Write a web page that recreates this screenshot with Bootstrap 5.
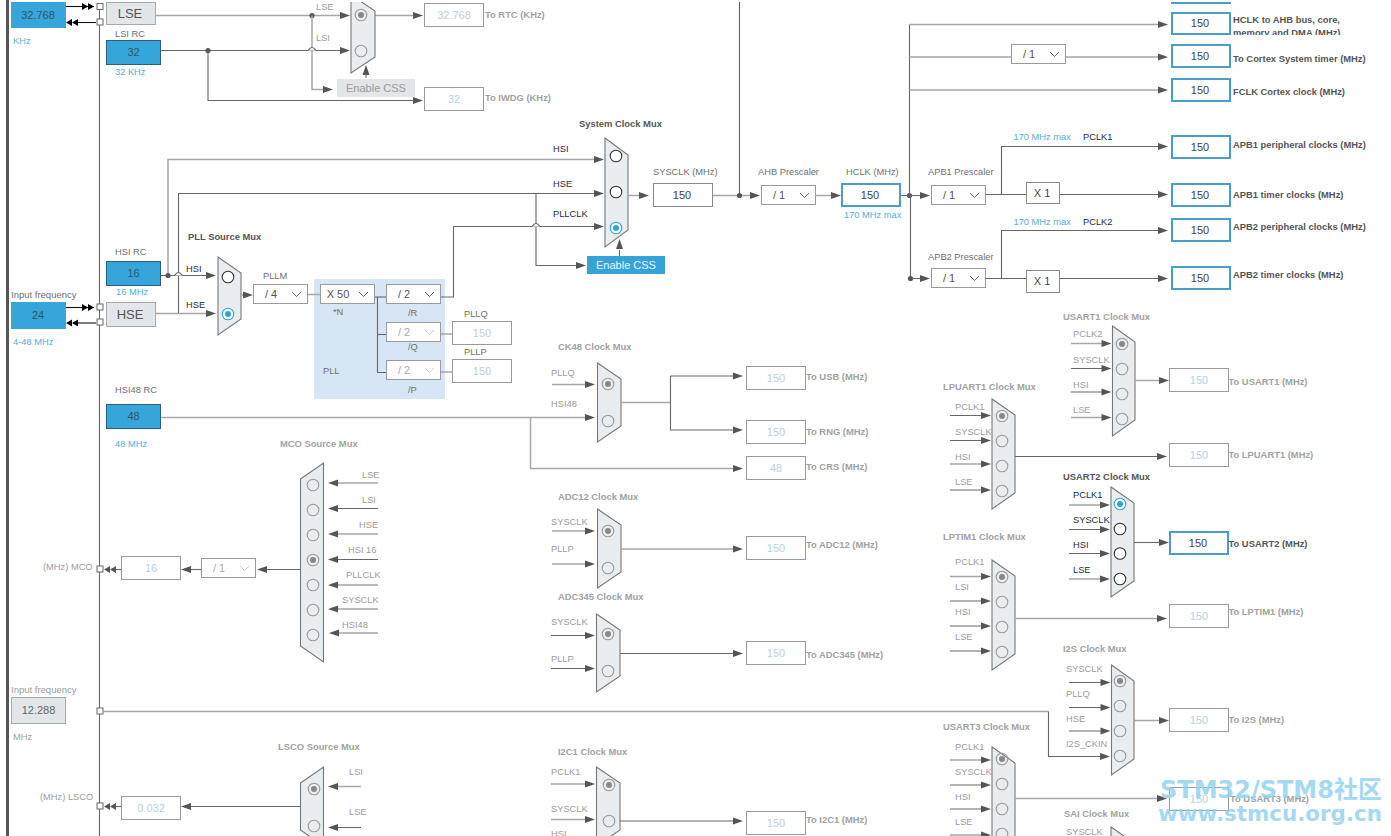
<!DOCTYPE html>
<html lang="en">
<head>
<meta charset="UTF-8" />
<meta name="viewport" content="width=device-width, initial-scale=1.0"/>
<title>Clock Configuration</title>
<link href="https://cdn.jsdelivr.net/npm/bootstrap@5.3.0/dist/css/bootstrap.min.css" rel="stylesheet">
<style>
body { background: #fff; overflow: hidden; }
#sheet { width: 1391px; height: 836px; overflow: hidden; font-family: "Liberation Sans", Arial, sans-serif; }
#sheet svg.wires { position: absolute; left: 0; top: 0; }
.left-rail { left: 6px; top: 0; width: 3px; height: 836px; background: #555; }
.top-strip { background: #fff; }
.pll-area { background: #d6e6f4; }
.lb { font-size: 9.3px; line-height: 12px; height: 12px; color: #6f6f6f; }
.lb-wide { font-size: 9.5px; }
.lb-off { color: #9c9c9c; }
.lb-navy { color: #1b2c3f; }
.lb-blue { color: #55aedb; }
.lb-bold { font-size: 9.4px; font-weight: 700; color: #555; }
.lb-boff { font-size: 9.4px; font-weight: 700; color: #a2a2a2; }
.nd { font-size: 11px; line-height: 1; }
.nd-src { background: #36a5da; border: 1px solid #2f5f78; color: #34566a; }
.nd-flat { background: #36a5da; color: #34566a; padding-right: 1px; }
.nd-gray { background: #e3e6e8; border: 1px solid #a8a8a8; color: #666; }
.nd-gray-big { font-size: 13px; color: #555; padding-right: 2px; }
.nd-off { background: #fff; border: 1px solid #9a9a9a; color: #b9d0e2; }
.nd-plain { background: #fff; border: 1px solid #8a8a8a; color: #444; padding-right: 2px; }
.nd-on { background: #fff; border: 2px solid #4a9dc6; color: #444; padding-right: 2px; }
.nd-css { background: #35a3d8; color: #eaf5fb; }
.nd-cssoff { background: #e3e6e8; color: #9a9a9a; }
.pick { background: #fff; border: 1px solid #9a9a9a; color: #555; font-size: 11px; padding-right: 19px; }
.pick svg { position: absolute; right: 5px; top: 50%; margin-top: -3px; stroke: #666; }
.pick-off { color: #aaa; }
.pick-off svg { stroke: #ccc; }
.mark-a, .mark-b { font-family: "DejaVu Sans", "Noto Sans CJK SC", sans-serif; font-weight: 700; color: #93d3f2; opacity: .85; z-index: 5; line-height: 1; }
.mark-a { font-size: 24px; }
.mark-b { font-size: 21.4px; }
</style>
</head>
<body>
<div id="sheet" class="position-relative">
    <div class="position-absolute left-rail"></div>
</div>
<script src="https://cdn.jsdelivr.net/npm/bootstrap@5.3.0/dist/js/bootstrap.bundle.min.js"></script>
<script>
const sheet = document.getElementById('sheet');
let svg = '';

function place(x, y, w, h, cls, text) {
    const el = document.createElement('div');
    el.className = 'position-absolute ' + cls;
    el.style.left = x + 'px';
    el.style.top = y + 'px';
    if (w) el.style.width = w + 'px';
    if (h) el.style.height = h + 'px';
    if (text) el.textContent = text;
    sheet.appendChild(el);
    return el;
}
// label, y is the centre of the text
function lb(x, y, text, cls) { place(x, y - 6, 0, 0, 'lb text-nowrap ' + (cls || ''), text); }
function nd(x, y, w, h, text, cls) { place(x, y, w, h, 'nd d-flex align-items-center justify-content-center ' + cls, text); }
// dropdown
function pick(x, y, w, h, text, off) {
    const el = place(x, y, w, h, 'pick d-flex align-items-center justify-content-center ' + (off ? 'pick-off' : ''), text);
    el.insertAdjacentHTML('beforeend', '<svg width="11" height="7" fill="none"><path d="M1 1l4.5 4.5L10 1"/></svg>');
}

function wire(d, tone) {
    const c = tone === 'l' ? '#a6a6a6' : tone === 'b' ? '#111' : '#666';
    svg += `<path d="${d}" fill="none" stroke="${c}" stroke-width="${tone === 'l' ? 1.5 : 1.1}"/>`;
}
function arrR(x, y, c) { svg += `<path d="M${x - 10} ${y - 3.5}L${x} ${y}L${x - 10} ${y + 3.5}Z" fill="${c || '#555'}"/>`; }
function arrL(x, y, c) { svg += `<path d="M${x + 10} ${y - 3.5}L${x} ${y}L${x + 10} ${y + 3.5}Z" fill="${c || '#555'}"/>`; }
function arrU(x, y) { svg += `<path d="M${x - 3.5} ${y + 10}L${x} ${y}L${x + 3.5} ${y + 10}Z" fill="#555"/>`; }
function dblR(x, y, c) { svg += `<path d="M${x - 12} ${y - 3.5}L${x - 6} ${y}L${x - 12} ${y + 3.5}ZM${x - 6} ${y - 3.5}L${x} ${y}L${x - 6} ${y + 3.5}Z" fill="${c}"/>`; }
function dblL(x, y, c) { svg += `<path d="M${x + 6} ${y - 3.5}L${x} ${y}L${x + 6} ${y + 3.5}ZM${x + 12} ${y - 3.5}L${x + 6} ${y}L${x + 12} ${y + 3.5}Z" fill="${c}"/>`; }
function dot(x, y) { svg += `<circle cx="${x}" cy="${y}" r="2.6" fill="#555"/>`; }
function pad(y) { svg += `<rect x="97" y="${y - 3}" width="6" height="6" fill="#fff" stroke="#666"/>`; }
function bump(x, y, tone) { svg += `<path d="M${x - 4} ${y}h-1M${x - 4} ${y}q4 -6 8 0" fill="#fff" stroke="${tone === 'l' ? '#a6a6a6' : '#666'}" stroke-width="1.1"/>`; }

// mux body, narrow side is on the right unless flip is set
function mux(x1, x2, y1, y2, cut, flip) {
    const pts = flip
        ? `${x1},${y1 + cut} ${x2},${y1} ${x2},${y2} ${x1},${y2 - cut}`
        : `${x1},${y1} ${x2},${y1 + cut} ${x2},${y2 - cut} ${x1},${y2}`;
    svg += `<polygon points="${pts}" fill="#e9edf0" stroke="#777" stroke-width="1.1"/>`;
}
// state: 0 off, 1 off+selected, 2 live, 3 live+selected
function radio(x, y, state) {
    const ring = state === 3 ? '#2ea4dc' : state === 2 ? '#333' : '#999';
    const fill = state >= 2 ? '#fff' : 'none';
    svg += `<circle cx="${x}" cy="${y}" r="5.8" fill="${fill}" stroke="${ring}" stroke-width="1.1"/>`;
    if (state === 1) svg += `<circle cx="${x}" cy="${y}" r="3" fill="#888"/>`;
    if (state === 3) svg += `<circle cx="${x}" cy="${y}" r="3" fill="#2ea4dc"/>`;
}

// left rails and input pins
wire('M99.5 6V836');
wire('M66 6.5H94', 'b'); dblR(94, 6.5, '#000');
wire('M78 22.5H96', 'b'); dblL(66, 22.5, '#000');
wire('M66 307.5H94', 'b'); dblR(94, 307.5, '#000');
wire('M78 323H96', 'b'); dblL(66, 323, '#000');
[6.5, 22, 307, 322, 569, 711, 806].forEach(pad);

// LSE / LSI to RTC and IWDG
wire('M156 15.5H342', 'l'); arrR(350, 15.5); dot(312, 15.5);
wire('M312 15.5V89.5H325', 'l'); arrR(333, 89.5);
wire('M161 50.5H342'); arrR(350, 50.5); dot(208, 50.5); bump(312, 50.5);
wire('M208 50.5V100.5H414'); arrR(423, 100.5);
wire('M375 15.5H415', 'l'); arrR(423, 15.5);
mux(351, 375, -5, 73, 16);
radio(361, 15, 1); radio(361, 51, 0);
wire('M366 78V70'); arrU(366, 65);

// system clock inputs
wire('M168 275V159.5H597', 'l'); arrR(604, 159.5);
wire('M178.5 313V193.5H597'); arrR(604, 193.5);
wire('M161 275.5H208'); arrR(216, 275.5); dot(168, 275.5); bump(178.5, 275.5);
wire('M156 313.5H208', 'l'); arrR(216, 313.5);
mux(218, 241, 257, 335, 16);
radio(228, 277, 2); radio(228, 314, 3);
wire('M241 295H246', 'l'); arrR(253, 295);

// PLL outputs
wire('M308 294.5H320', 'l');
wire('M375 297H386');
wire('M377.5 297V372.5H386');
wire('M377.5 334.5H386');
wire('M441 297H453.5V226.5H597'); arrR(604, 226.5);
wire('M441 334H452', 'l'); wire('M441 372H452', 'l');
wire('M536 193.5V265.5H579'); arrR(586, 265.5); bump(536, 226.5);
mux(605, 628, 138, 247, 17);
radio(616, 156, 2); radio(616, 192, 2); radio(616, 228, 3);
wire('M619.5 256V250'); arrU(619.5, 239);
wire('M628 195.5H642', 'l'); arrR(649, 195.5);

// AHB / APB tree
wire('M739.5 2V195.5');
wire('M713 195.5H752', 'l'); dot(739.5, 195.5); arrR(760, 195.5);
wire('M816 195.5H834', 'l'); arrR(841, 195.5);
wire('M900 195.5H909.5'); dot(909.5, 195.5);
wire('M909.5 24.5V195.5M910.5 195.5V278.5');
wire('M909.5 24.5H1160', 'l'); arrR(1168, 24.5);
wire('M909.5 57H1011', 'l'); wire('M1066 57H1160', 'l'); arrR(1168, 57);
wire('M909.5 90H1160', 'l'); arrR(1168, 90);
wire('M909.5 195.5H923'); arrR(930, 195.5);
wire('M986 194.5H1026'); wire('M1001.5 194.5V146.5H1160'); arrR(1168, 146.5);
wire('M1060 194.5H1160'); arrR(1168, 194.5);
wire('M910.5 278.5H923'); dot(910.5, 278.5); arrR(930, 278.5);
wire('M986 278.5H1026'); wire('M1001.5 278.5V230.5H1160'); arrR(1168, 230.5);
wire('M1060 278.5H1160'); arrR(1168, 278.5);

// CK48
wire('M161 417.5H586', 'l'); arrR(595, 417.5);
wire('M530.5 417.5V468.5H735', 'l'); arrR(743, 468.5);
wire('M552 384.5H586', 'l'); arrR(595, 384.5);
mux(597.5, 621, 363, 442, 16);
radio(608, 384, 1); radio(608, 421, 0);
wire('M621 402.5H670.5', 'l'); wire('M670.5 376H735M670.5 376V430H735'); arrR(743, 376); arrR(743, 430);

// ADC12 / ADC345
wire('M552 531H586', 'l'); arrR(595, 531);
wire('M552 564H586', 'l'); arrR(595, 564);
mux(597.5, 621, 509, 588, 16);
radio(608, 531, 1); radio(608, 568, 0);
wire('M621 549H735', 'l'); arrR(743, 549);
wire('M551 635.5H586'); arrR(595, 635.5);
wire('M551 668.5H586'); arrR(595, 668.5);
mux(596.5, 620, 614, 692, 16);
radio(608, 634, 1); radio(608, 671, 0);
wire('M620 653.5H735'); arrR(743, 653.5);

// external I2S clock
wire('M103 711.5H1048.5', 'l');
wire('M1048.5 711.5V756.5H1102'); arrR(1110, 756.5);

// I2C1
wire('M551 784H586', 'l'); arrR(595, 784);
wire('M551 819.5H586', 'l'); arrR(595, 819.5);
mux(596.5, 620, 767, 846, 16);
radio(609, 785, 1); radio(609, 821, 0);
wire('M620 821H735'); arrR(743, 821);

// MCO
mux(300.5, 323.5, 463, 662, 16, true);
[485, 510, 535, 560, 585, 610, 635].forEach((y, i) => radio(313, y, i === 3 ? 1 : 0));
[[483, 'l'], [508.5, 'k'], [534, 'l'], [559.5, 'k'], [585, 'l'], [609, 'l'], [633, 'l']].forEach(r => {
    wire(`M378 ${r[0]}H336`, r[1]); arrL(r[0] === 633 ? 329 : 328, r[0]);
});
wire('M300.5 569.5H266'); arrL(257, 569.5);
wire('M201 569.5H190'); arrL(181, 569.5);
wire('M121 569.5H114'); dblL(104, 569.5, '#555');

// LSCO
mux(300.5, 323.5, 767, 846, 16, true);
radio(314, 789, 1); radio(314, 826, 0);
wire('M361 786.5H336', 'l'); arrL(328, 786.5);
wire('M361 827.5H336'); arrL(328, 827.5);
wire('M300.5 806.5H190'); arrL(181, 806.5);
wire('M121 806.5H114'); dblL(104, 806.5, '#555');

// four input muxes on the right
function mux4(x1, x2, top, rx, ry, wx, wy, state, tone) {
    mux(x1, x2, top, top + 110, 16);
    ry.forEach((y, i) => radio(rx, y, state[i]));
    wy.forEach((y, i) => {
        wire(`M${wx} ${y}H${x1 - 9}`, tone[i]);
        arrR(x1 - 1, y);
    });
}
mux4(1112.5, 1135, 326, 1122, [344, 369, 394, 419], 1071, [343.5, 368.5, 392, 417.5], [1, 0, 0, 0], 'lkkl');
wire('M1135 380.5H1161', 'l'); arrR(1169, 380.5);
mux4(992, 1015, 399, 1002, [416, 441, 466, 491], 950, [415.5, 440.5, 464, 490], [1, 0, 0, 0], 'kklk');
wire('M1015 456.5H1159'); arrR(1167, 456.5);
mux4(1111, 1134, 487, 1120, [504, 529, 553.5, 579], 1069, [505, 529.5, 553.5, 579], [3, 2, 2, 2], 'lkkl');
wire('M1134 542.5H1161'); arrR(1169, 542.5);
mux4(992, 1015, 560, 1002, [577, 602, 627, 652], 950, [576.5, 601, 626, 651], [1, 0, 0, 0], 'lkkk');
wire('M1015 618.5H1159', 'l'); arrR(1167, 618.5);
mux4(1111.5, 1134, 665, 1120, [681, 706, 731, 756], 1069, [682.5, 707.5, 731], [1, 0, 0, 0], 'kkk');
wire('M1134 720.5H1161', 'l'); arrR(1169, 720.5);
mux4(992, 1015, 747, 1002, [759, 784, 809, 834], 950, [760, 785, 809, 835], [1, 0, 0, 0], 'lkkl');
wire('M1015 798.5H1159', 'l'); arrR(1167, 798.5);
mux(1111, 1134, 827, 937, 16);

// PLL backdrop goes under the wires
place(314, 279, 131, 120, 'pll-area');
sheet.insertAdjacentHTML('beforeend', `<svg class="wires" width="1391" height="836">${svg}</svg>`);

// left column
nd(11, 2, 55, 26, '32.768', 'nd-flat');
lb(13, 41, 'KHz', 'lb-blue');
nd(106, 2, 50, 23, 'LSE', 'nd-gray nd-gray-big');
lb(115, 34, 'LSI RC');
nd(106, 40, 55, 25, '32', 'nd-src');
lb(115, 72, '32 KHz', 'lb-blue');
lb(115, 252, 'HSI RC');
nd(106, 261, 55, 25, '16', 'nd-src');
lb(116, 292, '16 MHz', 'lb-blue');
lb(11, 295, 'Input frequency', 'lb-wide');
nd(11, 302, 55, 27, '24', 'nd-flat');
nd(106, 302, 50, 25, 'HSE', 'nd-gray nd-gray-big');
lb(13, 342, '4-48 MHz', 'lb-blue');
lb(115, 390, 'HSI48 RC');
nd(106, 404, 55, 25, '48', 'nd-src');
lb(115, 444, '48 MHz', 'lb-blue');
lb(43, 567, '(MHz) MCO', 'lb-off');
lb(11, 690, 'Input frequency', 'lb-off lb-wide');
nd(11, 697, 55, 27, '12.288', 'nd-gray');
lb(13, 737, 'MHz', 'lb-off');
lb(40, 797, '(MHz) LSCO', 'lb-off');

// RTC / IWDG
lb(316, 6.5, 'LSE', 'lb-off');
lb(316, 38, 'LSI', 'lb-off');
nd(337, 79, 78, 18, 'Enable CSS', 'nd-cssoff');
nd(424, 3, 60, 24, '32.768', 'nd-off');
lb(485, 15, 'To RTC (KHz)', 'lb-boff');
nd(424, 87, 60, 24, '32', 'nd-off');
lb(485, 98, 'To IWDG (KHz)', 'lb-boff');

// PLL
lb(188, 237, 'PLL Source Mux', 'lb-bold');
lb(186, 269, 'HSI', 'lb-navy');
lb(186, 305, 'HSE', 'lb-navy');
lb(263, 276, 'PLLM');
pick(253, 284, 55, 20, '/ 4');
pick(320, 284, 55, 20, 'X 50');
lb(333, 312, '*N');
pick(386, 284, 55, 20, '/ 2');
lb(408, 313, '/R');
pick(386, 322, 55, 20, '/ 2', true);
lb(408, 347, '/Q');
pick(386, 360, 55, 20, '/ 2', true);
lb(408, 390, '/P');
lb(323, 371, 'PLL');
lb(464, 314, 'PLLQ');
nd(452, 321, 60, 24, '150', 'nd-off');
lb(464, 352, 'PLLP');
nd(452, 359, 60, 24, '150', 'nd-off');

// system clock
lb(579, 124, 'System Clock Mux', 'lb-bold');
lb(553, 149, 'HSI', 'lb-navy');
lb(553, 183.5, 'HSE', 'lb-navy');
lb(553, 213.5, 'PLLCLK', 'lb-navy');
nd(587, 256, 78, 18, 'Enable CSS', 'nd-css');
lb(653, 171.5, 'SYSCLK (MHz)');
nd(653, 183, 60, 24, '150', 'nd-plain');
lb(758, 171.5, 'AHB Prescaler');
pick(761, 185, 55, 20, '/ 1');
lb(846, 171.5, 'HCLK (MHz)');
nd(841, 183, 60, 24, '150', 'nd-on');
lb(844, 214.5, '170 MHz max', 'lb-blue');

// outputs top right
nd(1171, -20, 60, 24, '', 'nd-on');
[[12, 23], [44, 24], [78, 24], [135, 24], [183, 24], [218, 24], [266, 24]].forEach(b => nd(1171, b[0], 60, b[1], '150', 'nd-on'));
lb(1233, 20, 'HCLK to AHB bus, core,', 'lb-bold');
place(1233, 26.5, 150, 8.5, 'lb lb-bold text-nowrap overflow-hidden', 'memory and DMA (MHz)');
pick(1011, 44, 55, 20, '/ 1');
lb(1233, 58.5, 'To Cortex System timer (MHz)', 'lb-bold');
lb(1233, 91.5, 'FCLK Cortex clock (MHz)', 'lb-bold');
lb(1233, 144.5, 'APB1 peripheral clocks (MHz)', 'lb-bold');
lb(1233, 194.5, 'APB1 timer clocks (MHz)', 'lb-bold');
lb(1233, 226.5, 'APB2 peripheral clocks (MHz)', 'lb-bold');
lb(1233, 274.5, 'APB2 timer clocks (MHz)', 'lb-bold');
lb(928, 171.5, 'APB1 Prescaler');
pick(931, 185, 55, 20, '/ 1');
nd(1026, 182, 34, 22, 'X 1', 'nd-plain');
lb(1013.5, 136.5, '170 MHz max', 'lb-blue');
lb(1083, 136.5, 'PCLK1', 'lb-navy');
lb(928, 256.5, 'APB2 Prescaler');
pick(931, 268, 55, 20, '/ 1');
nd(1026, 270, 34, 23, 'X 1', 'nd-plain');
lb(1013.5, 221.5, '170 MHz max', 'lb-blue');
lb(1083, 221.5, 'PCLK2', 'lb-navy');

// middle column
lb(558, 346.5, 'CK48 Clock Mux', 'lb-boff');
lb(551, 373, 'PLLQ', 'lb-off');
lb(551, 403.5, 'HSI48', 'lb-off');
nd(746, 366, 60, 24, '150', 'nd-off');
lb(806, 377, 'To USB (MHz)', 'lb-boff');
nd(746, 420, 60, 24, '150', 'nd-off');
lb(806, 431.5, 'To RNG (MHz)', 'lb-boff');
nd(746, 456, 60, 24, '48', 'nd-off');
lb(806, 466.5, 'To CRS (MHz)', 'lb-boff');
lb(558, 496.5, 'ADC12 Clock Mux', 'lb-boff');
lb(551, 521.5, 'SYSCLK', 'lb-off');
lb(551, 548.5, 'PLLP', 'lb-off');
nd(746, 536, 60, 24, '150', 'nd-off');
lb(806, 545, 'To ADC12 (MHz)', 'lb-boff');
lb(558, 596.5, 'ADC345 Clock Mux', 'lb-boff');
lb(551, 621.5, 'SYSCLK', 'lb-off');
lb(551, 658.5, 'PLLP', 'lb-off');
nd(746, 641, 60, 24, '150', 'nd-off');
lb(806, 655, 'To ADC345 (MHz)', 'lb-boff');
lb(558, 751.5, 'I2C1 Clock Mux', 'lb-boff');
lb(551, 771.5, 'PCLK1', 'lb-off');
lb(551, 809, 'SYSCLK', 'lb-off');
lb(551, 834, 'HSI', 'lb-off');
nd(746, 811, 60, 24, '150', 'nd-off');
lb(806, 819.5, 'To I2C1 (MHz)', 'lb-boff');

// MCO / LSCO
lb(280, 444, 'MCO Source Mux', 'lb-boff');
[[362, 474.5, 'LSE'], [362, 499.5, 'LSI'], [359, 524.5, 'HSE'], [348, 549.5, 'HSI 16'], [346, 574.5, 'PLLCLK'], [342, 599.5, 'SYSCLK'], [342, 624.5, 'HSI48']]
    .forEach(r => lb(r[0], r[1], r[2], 'lb-off'));
pick(201, 558, 55, 20, '/ 1', true);
nd(121, 556, 60, 24, '16', 'nd-off');
lb(278, 746.5, 'LSCO Source Mux', 'lb-boff');
lb(349, 772, 'LSI', 'lb-off');
lb(349, 812, 'LSE', 'lb-off');
nd(121, 796, 60, 24, '0.032', 'nd-off');

// right muxes
function labels4(x, ys, names, cls) { names.forEach((n, i) => lb(x, ys[i], n, cls)); }
lb(1063, 316.5, 'USART1 Clock Mux', 'lb-boff');
labels4(1073, [334, 359.5, 384.5, 409.5], ['PCLK2', 'SYSCLK', 'HSI', 'LSE'], 'lb-off');
nd(1169, 368, 60, 24, '150', 'nd-off');
lb(1228.5, 381.5, 'To USART1 (MHz)', 'lb-boff');
lb(943, 386.5, 'LPUART1 Clock Mux', 'lb-boff');
labels4(955, [406.5, 431.5, 456.5, 481.5], ['PCLK1', 'SYSCLK', 'HSI', 'LSE'], 'lb-off');
nd(1169, 443, 60, 24, '150', 'nd-off');
lb(1228.5, 454.5, 'To LPUART1 (MHz)', 'lb-boff');
lb(1063, 476.5, 'USART2 Clock Mux', 'lb-bold');
labels4(1073, [494.5, 519.5, 544.5, 569.5], ['PCLK1', 'SYSCLK', 'HSI', 'LSE'], 'lb-navy');
nd(1169, 531, 60, 24, '150', 'nd-on');
lb(1228.5, 543.5, 'To USART2 (MHz)', 'lb-bold');
lb(943, 536.5, 'LPTIM1 Clock Mux', 'lb-boff');
labels4(955, [561.5, 586.5, 611.5, 636.5], ['PCLK1', 'LSI', 'HSI', 'LSE'], 'lb-off');
nd(1169, 604, 60, 24, '150', 'nd-off');
lb(1228.5, 611.5, 'To LPTIM1 (MHz)', 'lb-boff');
lb(1063, 648.5, 'I2S Clock Mux', 'lb-boff');
labels4(1066, [668.5, 693.5, 718.5, 743.5], ['SYSCLK', 'PLLQ', 'HSE', 'I2S_CKIN'], 'lb-off');
nd(1169, 708, 60, 24, '150', 'nd-off');
lb(1228.5, 719.5, 'To I2S (MHz)', 'lb-boff');
lb(943, 726.5, 'USART3 Clock Mux', 'lb-boff');
labels4(955, [746.5, 771.5, 796.5, 821.5], ['PCLK1', 'SYSCLK', 'HSI', 'LSE'], 'lb-off');
nd(1169, 787, 60, 24, '150', 'nd-off');
lb(1230, 799, 'To USART3 (MHz)', 'lb-boff');
lb(1064, 813.5, 'SAI Clock Mux', 'lb-boff');
lb(1066, 831.5, 'SYSCLK', 'lb-off');

place(11, 0, 1380, 2, 'top-strip');
place(1160, 778, 0, 0, 'mark-a text-nowrap', 'STM32/STM8社区');
place(1158, 803, 0, 0, 'mark-b text-nowrap', 'www.stmcu.org.cn');
</script>
</body>
</html>
